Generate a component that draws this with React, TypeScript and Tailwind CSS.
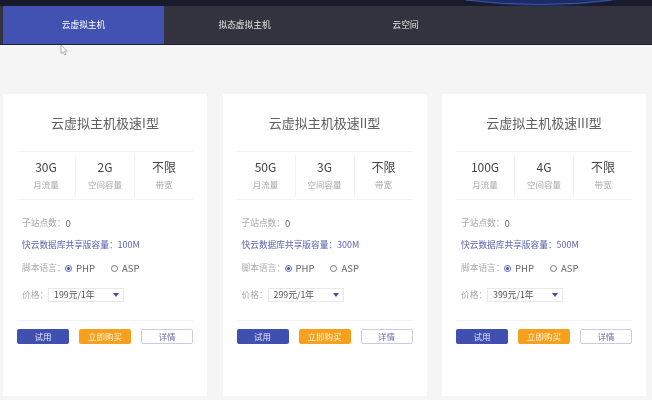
const font = "font-['Noto_Sans_CJK_SC','Liberation_Sans',sans-serif]";

const plans = [
  { name: "云虚拟主机极速I型", flow: "30G", disk: "2G", db: "100M", price: "199元/1年" },
  { name: "云虚拟主机极速II型", flow: "50G", disk: "3G", db: "300M", price: "299元/1年" },
  { name: "云虚拟主机极速III型", flow: "100G", disk: "4G", db: "500M", price: "399元/1年" },
];

function Stat({ value, label, border }: { value: string; label: string; border?: boolean }) {
  return (
    <div className={`flex-1 flex flex-col items-center pt-[3px] h-[42px] ${border ? "border-l border-[#f2f2f2]" : ""}`}>
      <div className="text-[12px] leading-[18px] text-[#444]">{value}</div>
      <div className="text-[8.5px] leading-[14px] mt-[1px] text-[#aaa]">{label}</div>
    </div>
  );
}

function Radio({ label, checked }: { label: string; checked?: boolean }) {
  return (
    <span className="flex items-center gap-[4px]">
      <span className={`w-[7px] h-[7px] rounded-full border flex items-center justify-center ${checked ? "border-[#5560b5]" : "border-[#777]"}`}>
        {checked && <span className="w-[3px] h-[3px] rounded-full bg-[#3f4fb0]" />}
      </span>
      <span className="text-[9.5px] text-[#666]">{label}</span>
    </span>
  );
}

function Card({ plan }: { plan: (typeof plans)[number] }) {
  return (
    <div className="w-[204px] h-[302px] bg-white px-[14px] flex flex-col">
      <h2 className="text-[13px] leading-[20px] mt-[19px] text-center text-[#606060] font-normal">{plan.name}</h2>
      <div className="mt-[18px] h-[49px] flex items-center border-y border-[#f2f2f2]">
        <Stat value={plan.flow} label="月流量" />
        <Stat value={plan.disk} label="空间容量" border />
        <Stat value="不限" label="带宽" border />
      </div>
      <div className="px-[5px] mt-[16px] flex flex-col text-[8.7px] text-[#aaa] whitespace-nowrap">
        <div className="h-[14px] flex items-center">
          子站点数：<span className="text-[9.5px] text-[#666]">0</span>
        </div>
        <div className="h-[14px] mt-[8px] flex items-center text-[#5a64b0]">
          快云数据库共享版容量：<span className="text-[9px]">{plan.db}</span>
        </div>
        <div className="h-[14px] mt-[9px] flex items-center">
          <span className="w-[42px]">脚本语言：</span>
          <span className="ml-[1px] flex gap-[16px]">
            <Radio label="PHP" checked />
            <Radio label="ASP" />
          </span>
        </div>
        <div className="h-[14px] mt-[13px] flex items-center">
          <span className="w-[26px]">价格：</span>
          <span className="w-[76px] h-[14px] border border-[#e8e8e8] flex items-center justify-between pl-[5px] pr-[4px] text-[8.8px] text-[#555]">
            {plan.price}
            <span className="w-0 h-0 border-x-[3px] border-x-transparent border-t-[4px] border-t-[#3f4fa8]" />
          </span>
        </div>
      </div>
      <div className="mt-[18px] pt-[8px] border-t border-[#f3f3f3] flex justify-between text-[8.5px]">
        <button className="w-[52px] h-[15px] rounded-[2px] bg-[#4050b0] text-[#e8eaf8]">试用</button>
        <button className="w-[52px] h-[15px] rounded-[2px] bg-[#f7a01d] text-[#fdf2dc]">立即购买</button>
        <button className="w-[52px] h-[15px] rounded-[2px] border border-[#c9cce4] bg-white text-[#6a70b0]">详情</button>
      </div>
    </div>
  );
}

export default function App() {
  return (
    <div className={`${font} relative w-[652px] h-[400px] overflow-hidden bg-[#f5f5f5] blur-[0.3px]`}>
      {/* top of the hero banner */}
      <div className="h-[6px] bg-[#191a2c] overflow-hidden">
        <svg width="652" height="6" viewBox="0 0 652 6">
          <path d="M462 0 Q540 12 618 0 Z" fill="#1c2a66" />
          <path d="M466 0 Q540 9 612 0" fill="none" stroke="#3a5a9c" strokeWidth="1" />
        </svg>
      </div>
      <nav className="h-[39px] bg-[#33323f] pl-[3px] flex border-b border-[#1f1e2b] text-[8.7px] text-[#e6e6ea]">
        <div className="w-[161px] bg-[#4152b3] flex items-center justify-center text-white">云虚拟主机</div>
        <div className="w-[161px] flex items-center justify-center">拟态虚拟主机</div>
        <div className="w-[161px] flex items-center justify-center">云空间</div>
      </nav>
      <div className="pl-[3px] pt-[49px] flex gap-[15.5px]">
        {plans.map((p) => (
          <Card key={p.name} plan={p} />
        ))}
      </div>
      {/* mouse pointer caught in the screenshot */}
      <svg className="absolute left-[60px] top-[44px]" width="9" height="12" viewBox="0 0 9 12">
        <path d="M1 1 L1 9.5 L3 7.8 L4.6 11 L6 10.3 L4.6 7.3 L7.4 7.2 Z" fill="#f8f8f8" stroke="#999" strokeWidth="0.7" />
      </svg>
    </div>
  );
}
